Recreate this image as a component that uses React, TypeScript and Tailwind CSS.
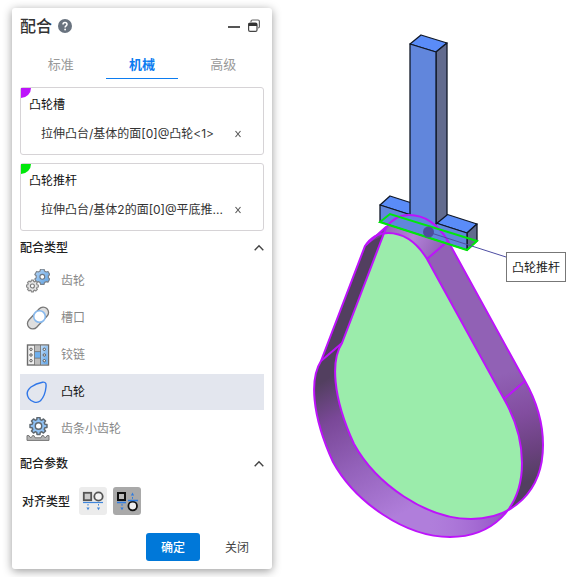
import { useState, type ReactNode } from "react";

function gearPath(cx: number, cy: number, outer: number, inner: number, teeth: number) {
  const points: string[] = [];
  const step = (Math.PI * 2) / teeth;
  for (let i = 0; i < teeth; i++) {
    const a = i * step - Math.PI / 2;
    const corners: [number, number][] = [
      [-0.34, inner],
      [-0.22, outer],
      [0.22, outer],
      [0.34, inner],
    ];
    for (const [t, r] of corners) {
      const x = cx + Math.cos(a + t * step) * r;
      const y = cy + Math.sin(a + t * step) * r;
      points.push(`${x.toFixed(2)} ${y.toFixed(2)}`);
    }
  }
  return `M${points.join("L")}Z`;
}

function GearsIcon() {
  return (
    <svg width="24" height="24" viewBox="0 0 24 24" strokeLinejoin="round">
      <defs>
        <linearGradient id="gearBlue" x1="0" y1="0" x2="1" y2="1">
          <stop offset="0" stopColor="#b5d6f8" />
          <stop offset="1" stopColor="#5b9fe0" />
        </linearGradient>
      </defs>
      <path d={gearPath(16.3, 7.8, 7.8, 6.2, 6)} fill="url(#gearBlue)" stroke="#7b838c" strokeWidth="1.2" />
      <circle cx="16.3" cy="7.8" r="2.4" fill="#fff" stroke="#6f7780" strokeWidth="1.1" />
      <path d={gearPath(6.4, 17, 6, 4.8, 8)} fill="#e4e4e4" stroke="#888" strokeWidth="1.2" />
      <circle cx="6.4" cy="17" r="2" fill="#fff" stroke="#777" strokeWidth="1.1" />
    </svg>
  );
}

function SlotIcon() {
  return (
    <svg width="24" height="24" viewBox="0 0 24 24">
      <path d="M6.8 17.6L17.2 6.4" stroke="#777" strokeWidth="12" strokeLinecap="round" />
      <path d="M6.8 17.6L17.2 6.4" stroke="#dedede" strokeWidth="9.4" strokeLinecap="round" />
      <circle cx="13.5" cy="10.5" r="5.8" fill="#fff" stroke="#85b8ee" strokeWidth="1.5" />
    </svg>
  );
}

function HingeIcon() {
  return (
    <svg width="24" height="24" viewBox="0 0 24 24">
      <defs>
        <linearGradient id="hingeBlue" x1="0" y1="0" x2="1" y2="1">
          <stop offset="0" stopColor="#c2defa" />
          <stop offset="1" stopColor="#5da3e8" />
        </linearGradient>
      </defs>
      <rect x="1.5" y="2" width="21" height="20" fill="#f1f1f1" stroke="#6c6c6c" strokeWidth="1.4" />
      <rect x="14.5" y="2.7" width="7.3" height="18.6" fill="url(#hingeBlue)" />
      <rect x="8.5" y="2.7" width="6" height="6" fill="#bdbdbd" />
      <rect x="8.5" y="8.6" width="6" height="6.6" fill="#6fb0ee" />
      <rect x="8.5" y="15.2" width="6" height="6.1" fill="#bdbdbd" />
      <path d="M8.5 2v20M14.5 2v20M8.5 8.6h6M8.5 15.2h6" stroke="#6c6c6c" strokeWidth="0.8" />
      <g fill="#fff" stroke="#555" strokeWidth="1">
        <circle cx="5" cy="6.3" r="1.2" />
        <circle cx="5" cy="12" r="1.2" />
        <circle cx="5" cy="17.7" r="1.2" />
        <circle cx="18.3" cy="6.3" r="1.2" />
        <circle cx="18.3" cy="12" r="1.2" />
        <circle cx="18.3" cy="17.7" r="1.2" />
      </g>
    </svg>
  );
}

function CamIcon() {
  return (
    <svg width="24" height="24" viewBox="0 0 24 24">
      <path
        d="M16.5 2.2C20 1.6 20.3 4 20 7C19.5 12.5 17.5 17.5 14.5 20.8C11 23.8 5.5 22 2.8 18.3C0 14 1.2 10 5 7C9 4 12.5 2.8 16.5 2.2Z"
        fill="none"
        stroke="#3077e8"
        strokeWidth="1.4"
      />
    </svg>
  );
}

function RackIcon() {
  return (
    <svg width="24" height="24" viewBox="0 0 24 24" strokeLinejoin="round">
      <path
        d="M1 23.4V18.6H3L4 20.4H5.5L6.5 18.6H8L9 20.8H15L16 18.6H17.5L18.5 20.4H20L21 18.6H23V23.4Z"
        fill="#b5b5b5"
        stroke="#777"
        strokeWidth="1"
      />
      <path d={gearPath(12.5, 9, 8.6, 6.6, 8)} fill="#8fc1f3" stroke="#5f6870" strokeWidth="1.5" />
      <circle cx="12.5" cy="9" r="3.2" fill="#fff" stroke="#5f6870" strokeWidth="1.4" />
    </svg>
  );
}

function AlignedIcon() {
  return (
    <svg width="24" height="24" viewBox="0 0 24 24">
      <rect x="2.8" y="3.8" width="7.4" height="7.4" fill="#ccc" stroke="#555" strokeWidth="1.8" />
      <circle cx="17.5" cy="7.5" r="4.2" fill="#f4f4f4" stroke="#555" strokeWidth="1.8" />
      <path d="M2 13.5H22" stroke="#3f86dc" strokeWidth="1.2" />
      <path d="M7 15v1.6M17.5 15v1.6" stroke="#3f86dc" strokeWidth="1" />
      <path d="M5.4 18.4h3.2l-1.6 2.8zM15.9 18.4h3.2l-1.6 2.8z" fill="#3f86dc" />
    </svg>
  );
}

function AntiAlignedIcon() {
  return (
    <svg width="24" height="24" viewBox="0 0 24 24">
      <rect x="3" y="4" width="7" height="7" fill="#bbb" stroke="#111" strokeWidth="2" />
      <circle cx="17.7" cy="17" r="4.3" fill="#eee" stroke="#111" strokeWidth="1.8" />
      <path d="M2 13.5H11M13 11.5H23" stroke="#2f7be0" strokeWidth="1.3" />
      <path d="M7 15v1.8M17.5 8v1.8" stroke="#2f7be0" strokeWidth="1" />
      <path d="M5.4 18.4h3.2l-1.6 2.8zM15.9 6.4h3.2l-1.6-3z" fill="#2f7be0" />
    </svg>
  );
}

const mateTypes: { name: string; icon: ReactNode }[] = [
  { name: "齿轮", icon: <GearsIcon /> },
  { name: "槽口", icon: <SlotIcon /> },
  { name: "铰链", icon: <HingeIcon /> },
  { name: "凸轮", icon: <CamIcon /> },
  { name: "齿条小齿轮", icon: <RackIcon /> },
];

const tabs = ["标准", "机械", "高级"];

function SelectionBox({ title, entity, corner }: { title: string; entity: string; corner: string }) {
  return (
    <section className="h-[68px] rounded-[3px] border border-[#d6d3d6]">
      <div className="flex h-8 items-start">
        <span className={`h-2.5 w-2.5 shrink-0 rounded-br-full ${corner}`} />
        <h3 className="-ml-0.5 pt-2 text-xs leading-[18px] text-[#111]">{title}</h3>
      </div>
      <div className="flex h-7 items-center px-5">
        <span className="min-w-0 flex-1 font-['Inter','Noto_Sans_CJK_SC',sans-serif] text-xs leading-4 whitespace-nowrap text-[#333]">
          {entity}
        </span>
        <button type="button" aria-label="移除" className="flex h-4 w-2.5 items-center justify-center">
          <svg width="8" height="8" viewBox="0 0 8 8">
            <path d="M1.5 1L6.5 7M6.5 1L1.5 7" stroke="#555" strokeWidth="1.1" />
          </svg>
        </button>
      </div>
    </section>
  );
}

function SectionHeader({ title, onClick }: { title: string; onClick: () => void }) {
  return (
    <button type="button" onClick={onClick} className="flex h-8 w-full items-center justify-between pt-0.5 text-xs font-medium text-[#222]">
      {title}
      <svg width="10" height="8" viewBox="0 0 10 8" fill="none">
        <path d="M0.7 6.2L5 1.8L9.3 6.2" stroke="#444" strokeWidth="1.4" />
      </svg>
    </button>
  );
}

const loop =
  "M321 361L365 246C371 237 378 233 388 233C403 233 416 241 427 259L504 399C516 420 522 441 522 463C522 510 491 537 450 537C405 537 355 502 333 462C311 414 310 378 321 361Z";

function Scene() {
  return (
    <svg width="308" height="577" viewBox="272 0 308 577" role="img" aria-label="凸轮模型" className="block">
      <defs>
        <linearGradient id="nearWall" gradientUnits="userSpaceOnUse" x1="325" y1="380" x2="400" y2="515">
          <stop offset="0" stopColor="#523f5f" />
          <stop offset="0.25" stopColor="#7a4898" />
          <stop offset="0.6" stopColor="#9462bb" />
          <stop offset="1" stopColor="#b07edb" />
        </linearGradient>
        <linearGradient id="nearFloor" gradientUnits="userSpaceOnUse" x1="430" y1="520" x2="508" y2="520">
          <stop offset="0" stopColor="#a96fd8" stopOpacity="0" />
          <stop offset="1" stopColor="#914fc4" />
        </linearGradient>
        <linearGradient id="farWall" gradientUnits="userSpaceOnUse" x1="505" y1="385" x2="535" y2="492">
          <stop offset="0" stopColor="#9161b5" />
          <stop offset="0.4" stopColor="#824d9f" />
          <stop offset="0.75" stopColor="#69417d" />
          <stop offset="1" stopColor="#523f5f" />
        </linearGradient>
        <linearGradient id="tip" gradientUnits="userSpaceOnUse" x1="390" y1="225" x2="440" y2="252">
          <stop offset="0" stopColor="#9a65bd" />
          <stop offset="0.45" stopColor="#b382d9" />
          <stop offset="1" stopColor="#9161b5" />
        </linearGradient>
        <clipPath id="nearClip">
          <path d={loop} />
        </clipPath>
      </defs>

      <path d={loop} fill="url(#nearWall)" />
      <path d={loop} fill="url(#nearFloor)" />
      <path d={loop} transform="translate(21 -18)" fill="url(#farWall)" />
      <path d="M366 244L386 226L388 233Z" fill="#6d4a85" />
      <path d="M384 233C390 220 397 215 409 215C424 215 437 223 448 241L427 259C416 241 403 233 388 233Z" fill="url(#tip)" />
      <g clipPath="url(#nearClip)">
        <path d={loop} transform="translate(21 -18)" fill="#9becab" />
      </g>

      <g stroke="#101827" strokeWidth="1.3" strokeLinejoin="round">
        <path d="M380 205L390 196L477 224L467 233Z" fill="#5a8cf8" />
        <path d="M467 233L477 224V241L467 250Z" fill="#626b8e" />
        <path d="M380 205L467 233V250L380 222Z" fill="#6186dc" />
        <path d="M410 44L421 35L447 43L436 52Z" fill="#5a8cf8" />
        <path d="M436 52L447 43V215L436 224Z" fill="#626b8e" />
        <path d="M410 214V44L436 52V224" fill="#6186dc" />
      </g>
      <path d="M411 212L435 222V230H411Z" fill="#6186dc" />

      <g fill="none" stroke="#bd13fb" strokeWidth="2">
        <path d={loop} />
        <path d={loop} transform="translate(21 -18)" />
        <path d="M321 361L342 343M504 399L525 381M427 259L448 241M366 245L386 227" />
      </g>
      <path d="M380 222L390 214L477 241L467 250Z" fill="none" stroke="#00e80b" strokeWidth="2" />
      <path d="M428 232L506 257" stroke="#4d4da2" strokeWidth="1" />
      <circle cx="428.5" cy="232" r="5.5" fill="#4d4d9c" />
    </svg>
  );
}

export default function App() {
  const [tab, setTab] = useState("机械");
  const [mate, setMate] = useState("凸轮");
  const [typesOpen, setTypesOpen] = useState(true);
  const [paramsOpen, setParamsOpen] = useState(true);
  const [anti, setAnti] = useState(true);

  return (
    <main className="flex min-h-screen items-start overflow-hidden bg-white font-['Noto_Sans','Noto_Sans_CJK_SC',sans-serif]">
      <aside className="mt-2 ml-3 w-[260px] shrink-0 rounded-[3px] bg-white p-2 shadow-[0_2px_10px_rgba(0,0,0,0.4)]">
        <header className="flex h-5 items-center text-[#333]">
          <h1 className="text-base leading-5 font-medium">配合</h1>
          <button type="button" aria-label="帮助" className="ml-1.5">
            <svg width="14" height="14" viewBox="0 0 14 14" className="block">
              <circle cx="7" cy="7" r="7" fill="#69737f" />
              <path d="M5 5.4C5 3 9 3 9 5.4C9 6.8 7.1 6.8 7.1 8.4" fill="none" stroke="#fff" strokeWidth="1.5" />
              <circle cx="7.1" cy="10.5" r="0.9" fill="#fff" />
            </svg>
          </button>
          <span className="flex-1" />
          <button type="button" aria-label="最小化" className="mr-2">
            <svg width="12" height="14" viewBox="0 0 12 14" className="block">
              <path d="M0 8H12" stroke="#555" strokeWidth="2" />
            </svg>
          </button>
          <button type="button" aria-label="还原" className="mr-1">
            <svg width="12" height="14" viewBox="0 0 12 14" fill="none" className="block">
              <path d="M3 3V2.5Q3 1 4.5 1H10Q11.4 1 11.4 2.5V7.5Q11.4 9 10 9" stroke="#666" strokeWidth="1.2" />
              <rect x="0.6" y="4" width="8.4" height="8.4" rx="1.5" stroke="#444" strokeWidth="1.2" />
              <path d="M0.6 5.5H9" stroke="#333" strokeWidth="3" />
            </svg>
          </button>
        </header>

        <div role="tablist" className="mt-3.5 flex h-[29px] text-[13px]">
          {tabs.map((name) => (
            <button
              key={name}
              type="button"
              role="tab"
              aria-selected={tab === name}
              onClick={() => setTab(name)}
              className="flex flex-1 justify-center"
            >
              <span
                className={
                  tab === name
                    ? "h-[29px] w-[72px] border-b border-[#0c7cf0] leading-[29px] font-bold text-[#0c7cf0]"
                    : "h-[29px] w-[72px] leading-[29px] text-[#999]"
                }
              >
                {name}
              </span>
            </button>
          ))}
        </div>

        <div className="mt-2 flex flex-col gap-2">
          <SelectionBox title="凸轮槽" entity="拉伸凸台/基体的面[0]@凸轮<1>" corner="bg-[#bd13fb]" />
          <SelectionBox title="凸轮推杆" entity="拉伸凸台/基体2的面[0]@平底推..." corner="bg-[#00e80b]" />
        </div>

        <SectionHeader title="配合类型" onClick={() => setTypesOpen(!typesOpen)} />
        {typesOpen && (
          <div className="flex flex-col gap-px">
            {mateTypes.map(({ name, icon }) => (
              <button
                key={name}
                type="button"
                onClick={() => setMate(name)}
                className={
                  mate === name
                    ? "flex h-9 items-center gap-[11px] bg-[#e3e6ee] pl-1.5 text-xs text-[#111]"
                    : "flex h-9 items-center gap-[11px] pl-1.5 text-xs text-[#888]"
                }
              >
                {icon}
                {name}
              </button>
            ))}
          </div>
        )}

        <SectionHeader title="配合参数" onClick={() => setParamsOpen(!paramsOpen)} />
        {paramsOpen && (
          <div className="mt-2 flex h-7 items-center pl-0.5">
            <span className="mr-[9px] pt-0.5 text-xs font-medium text-[#222]">对齐类型</span>
            <div className="flex gap-1.5">
              <button
                type="button"
                aria-label="同向对齐"
                onClick={() => setAnti(false)}
                className={`flex size-7 items-center justify-center rounded-[3px] ${anti ? "bg-[#ececec]" : "bg-[#a9a9a9]"}`}
              >
                <AlignedIcon />
              </button>
              <button
                type="button"
                aria-label="反向对齐"
                onClick={() => setAnti(true)}
                className={`flex size-7 items-center justify-center rounded-[3px] ${anti ? "bg-[#a9a9a9]" : "bg-[#ececec]"}`}
              >
                <AntiAlignedIcon />
              </button>
            </div>
          </div>
        )}

        <footer className="mt-[18px] flex justify-end gap-2.5 text-xs">
          <button type="button" className="h-7 w-[54px] rounded-[3px] bg-[#0078d9] pt-0.5 font-medium text-white">
            确定
          </button>
          <button type="button" className="h-7 w-[54px] pt-0.5 text-[#444]">
            关闭
          </button>
        </footer>
      </aside>

      <section className="relative w-[308px] shrink-0">
        <Scene />
        <div className="absolute top-[252px] left-[234px] flex h-[30px] w-[60px] items-center justify-center border border-[#777] bg-white pt-0.5 text-xs text-[#222]">
          凸轮推杆
        </div>
      </section>
    </main>
  );
}
